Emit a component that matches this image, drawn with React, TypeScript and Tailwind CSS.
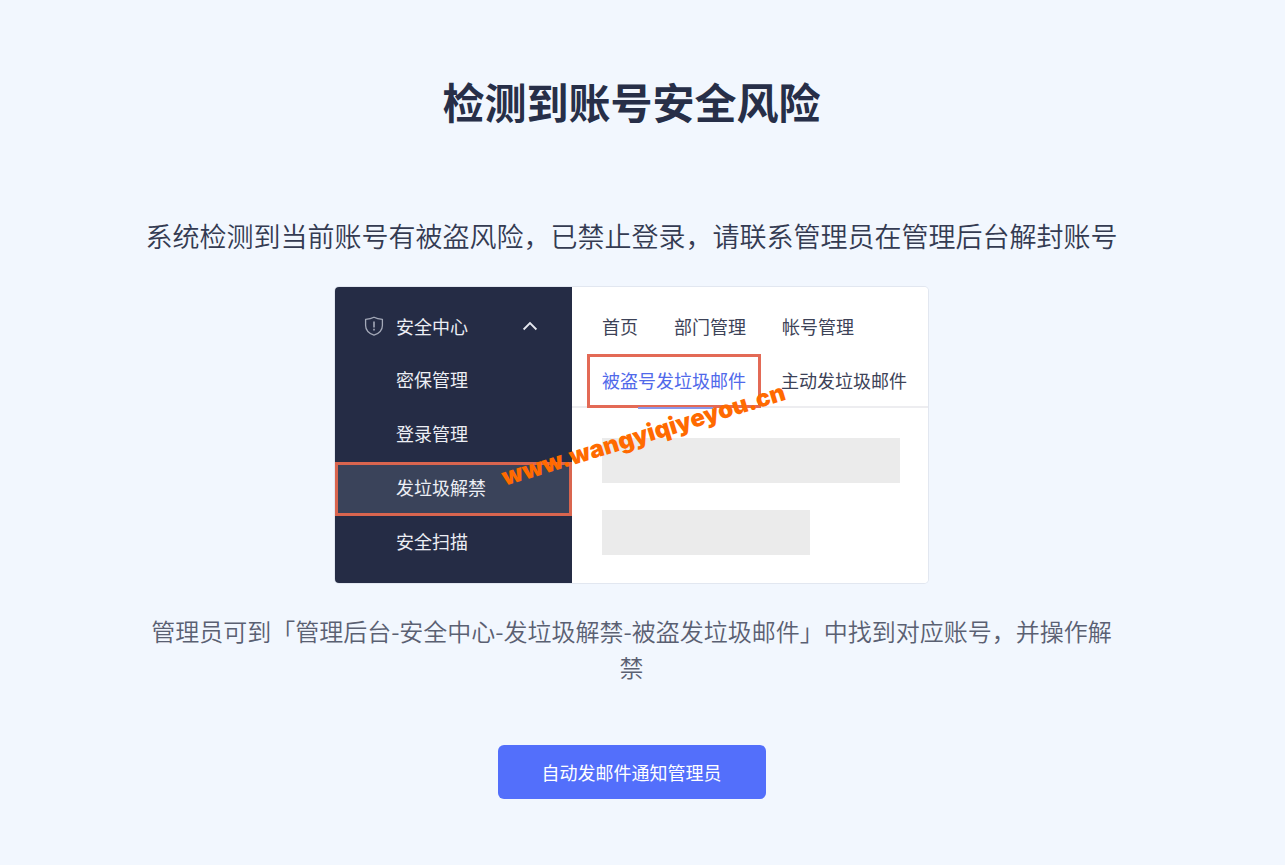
const sideItems = ["密保管理", "登录管理", "发垃圾解禁", "安全扫描"];
const activeItem = "发垃圾解禁";

function ShieldIcon() {
  return (
    <svg
      className="h-5 w-5 shrink-0"
      viewBox="0 0 20 20"
      fill="none"
      stroke="#a4a9b8"
      strokeWidth="1.3"
      strokeLinejoin="round"
      aria-hidden="true"
    >
      <path d="M10 1.2C7.6 2.5 4.8 3.1 1.6 3.3V9.4C1.6 14.2 5.2 17.4 10 19.2C14.8 17.4 18.4 14.2 18.4 9.4V3.3C15.2 3.1 12.4 2.5 10 1.2Z" />
      <path d="M10 5.5V11.5M10 12.8V14.6" strokeWidth="1.6" />
    </svg>
  );
}

function ChevronUp() {
  return (
    <svg
      className="h-4 w-4"
      viewBox="0 0 16 16"
      fill="none"
      stroke="#e6e8ef"
      strokeWidth="1.8"
      aria-hidden="true"
    >
      <path d="M1.6 11.5L8 5L14.4 11.5" />
    </svg>
  );
}

function Sidebar() {
  return (
    <nav className="w-[237px] shrink-0 rounded-l bg-[#252c45] py-[13px] text-[18px] text-[#eceef4]">
      <button className="flex h-[54px] w-full items-center pr-[34px] pb-0.5 pl-[29px] text-left">
        <ShieldIcon />
        <span className="ml-3 flex-1">安全中心</span>
        <ChevronUp />
      </button>
      <ul>
        {sideItems.map((item) => (
          <li key={item}>
            <a
              href="#"
              className={
                item === activeItem
                  ? "flex h-[54px] items-center border-3 border-[#d9654f] bg-[#3a435a] pb-1 pl-[58px]"
                  : "flex h-[54px] items-center pb-1 pl-[61px]"
              }
            >
              {item}
            </a>
          </li>
        ))}
      </ul>
    </nav>
  );
}

function Panel() {
  return (
    <div className="min-w-0 flex-1 rounded-r bg-white text-[18px] whitespace-nowrap text-[#3d4257]">
      <div className="border-b-2 border-[#ededf0] pt-[13px]">
        <div className="flex h-[54px] items-center gap-9 pb-0.5 pl-[30px]">
          <a href="#">首页</a>
          <a href="#">部门管理</a>
          <a href="#">帐号管理</a>
        </div>
        <div className="-mb-0.5 flex h-[54px] items-center pl-[15px]">
          <a
            href="#"
            className="relative flex h-[54px] items-center border-3 border-[#e36a56] px-3 pb-0.5 text-[#5069ea]"
          >
            被盗号发垃圾邮件
            <span className="absolute -bottom-1 left-12 h-0.5 w-[75px] bg-[#8b97e8]" />
          </a>
          <a href="#" className="ml-5 pb-0.5">
            主动发垃圾邮件
          </a>
        </div>
      </div>
      <div className="flex flex-col gap-[27px] px-7 pt-[30px] pl-[30px]">
        <div className="h-[45px] w-full bg-[#ebebeb]" />
        <div className="h-[45px] w-[208px] bg-[#ebebeb]" />
      </div>
    </div>
  );
}

export default function App() {
  return (
    <main className="flex min-h-screen flex-col items-center bg-[#f2f7fe] pr-[22px] pb-[66px] font-['Noto_Sans_CJK_SC',sans-serif]">
      <h1 className="pt-[69px] text-[42px] leading-[64px] font-bold text-[#272f48]">
        检测到账号安全风险
      </h1>
      <p className="mt-[83px] text-[27px] leading-10 font-[350] text-[#343b52]">
        系统检测到当前账号有被盗风险，已禁止登录，请联系管理员在管理后台解封账号
      </p>

      <section className="relative mt-[31px] flex h-[296px] w-[593px] rounded shadow-[0_0_0_1px_#e2e7f0]">
        <Sidebar />
        <Panel />
        <span className="pointer-events-none absolute top-[130px] left-[161px] -rotate-17 font-['Inter',sans-serif] text-[24px] font-black text-[#ff6a00]">
          www.wangyiqiyeyou.cn
        </span>
      </section>

      <p className="mt-[30px] max-w-[972px] text-center text-[24px] leading-9 font-[350] text-[#5a6072]">
        管理员可到「管理后台-安全中心-发垃圾解禁-被盗发垃圾邮件」中找到对应账号，并操作解禁
      </p>
      <button className="mt-[60px] h-[54px] w-[268px] rounded-md bg-[#536ffb] text-[18px] text-white">
        自动发邮件通知管理员
      </button>
    </main>
  );
}
